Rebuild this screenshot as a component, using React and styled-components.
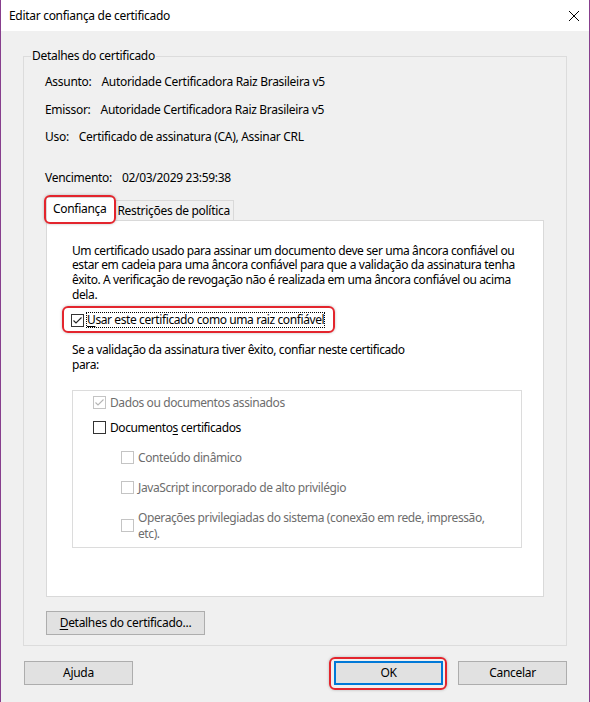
import React from 'react'
import styled, { createGlobalStyle, css } from 'styled-components'

const GlobalStyle = createGlobalStyle`
  html, body {
    margin: 0;
    padding: 0;
    background: #f0f0f0;
  }
  body {
    font-family: "Noto Sans", "Open Sans", sans-serif;
    font-size: 12px;
    color: #000;
  }
`

const marked = css`
  position: relative;
  &::after {
    content: '';
    position: absolute;
    inset: ${props => props.$mark};
    border: 2px solid #e3252d;
    border-radius: 6px;
    box-shadow: 0 0 3px rgba(0, 0, 0, 0.25);
    pointer-events: none;
  }
`

const Window = styled.div`
  width: 590px;
  height: 702px;
  box-sizing: border-box;
  border-left: 1px solid #873e8d;
  border-right: 1px solid #873e8d;
  background: #f0f0f0;
  display: flex;
  flex-direction: column;
`

const TitleBar = styled.div`
  height: 31px;
  flex: none;
  background: #fff;
  display: flex;
  align-items: center;
  justify-content: space-between;
  padding: 0 9px 0 8px;
`

const Title = styled.span`
  font-size: 12px;
  letter-spacing: -0.3px;
`

const Body = styled.div`
  flex: 1;
  display: flex;
  flex-direction: column;
  padding: 25px 22px 0;
  letter-spacing: -0.3px;
`

const GroupBox = styled.div`
  position: relative;
  border: 1px solid #dcdcdc;
  padding: 17px 22px 10px;
`

const GroupLegend = styled.span`
  position: absolute;
  top: -9px;
  left: 7px;
  padding: 0 1px;
  line-height: 16px;
  background: #f0f0f0;
`

const DetailList = styled.div`
  display: flex;
  flex-direction: column;
  gap: 11.5px;
  margin-left: -1px;
`

const DetailRow = styled.div`
  display: flex;
  gap: ${props => props.$gap || 10}px;
  line-height: 16px;
  margin-top: ${props => props.$push || 0}px;
`

const TabStrip = styled.div`
  display: flex;
  align-items: flex-end;
  height: 23px;
  margin-top: 11px;
  position: relative;
  z-index: 1;
`

const Tab = styled.div`
  box-sizing: border-box;
  display: flex;
  align-items: center;
  border: 1px solid #d9d9d9;
  border-bottom: none;
  ${props => props.$active ? css`
    height: 24px;
    margin-bottom: -1px;
    padding: 0 8px 1px 6px;
    background: #fff;
  ` : css`
    height: 20px;
    padding: 0 3px 0 2px;
    margin-left: -1px;
    background: #f0f0f0;
  `}
  ${props => props.$mark && marked}
`

const Panel = styled.div`
  box-sizing: border-box;
  height: 377px;
  background: #fff;
  border: 1px solid #d9d9d9;
  padding: 23px 21px 0 25px;
  display: flex;
  flex-direction: column;
  letter-spacing: -0.4px;
`

const Paragraph = styled.p`
  margin: ${props => props.$top || 0}px 0 0;
  line-height: 14.7px;
  white-space: nowrap;
`

const CheckRow = styled.div`
  display: flex;
  align-items: center;
  gap: ${props => props.$gap || 4}px;
  line-height: 16px;
  color: ${props => props.$disabled ? '#6d6d6d' : '#000'};
  ${props => props.$mark && marked}
`

const TrustRow = styled(CheckRow)`
  align-self: flex-start;
  margin: 10px 0 0 -1px;
`

const FocusLabel = styled.span`
  padding: 0 1px;
  outline: 1px dotted #000;
  outline-offset: -1px;
`

const Key = styled.span`
  text-decoration: underline;
  text-underline-offset: 2px;
`

const Box = styled.span`
  box-sizing: border-box;
  flex: none;
  width: 13px;
  height: 13px;
  border: 1px solid ${props => props.$disabled ? '#c4c4c4' : '#333'};
  background: #fff;
  display: flex;
  align-items: center;
  justify-content: center;
`

const OptionBox = styled.div`
  margin-top: 17px;
  border: 1px solid #dcdcdc;
  padding: 4px 10px 5px 20px;
  display: flex;
  flex-direction: column;
  gap: 9px;
`

const SubList = styled.div`
  display: flex;
  flex-direction: column;
  gap: 14px;
  margin-top: 5px;
  padding-left: 28px;
`

const Button = styled.button`
  box-sizing: border-box;
  height: 24px;
  width: ${props => props.$width}px;
  font-family: inherit;
  font-size: 12px;
  letter-spacing: -0.3px;
  color: #000;
  background: #e1e1e1;
  border: ${props => props.$primary ? '2px solid #0078d7' : '1px solid #adadad'};
  padding: 0;
  ${props => props.$mark && marked}
`

const DetailsButton = styled(Button)`
  margin-top: 14px;
  align-self: flex-start;
`

const Footer = styled.div`
  display: flex;
  justify-content: space-between;
  margin-top: 15px;
  padding-left: 1px;
`

const FooterRight = styled.div`
  display: flex;
  gap: 15px;
`

const Check = ({ checked, disabled }) => (
  <Box $disabled={disabled}>
    {checked && (
      <svg width="11" height="11" viewBox="0 0 11 11">
        <polyline points="1.5,5.5 4,8 9.5,2.5" fill="none" stroke={disabled ? '#b5b5b5' : '#222'} strokeWidth="1.1" />
      </svg>
    )}
  </Box>
)

const CloseIcon = () => (
  <svg width="12" height="12" viewBox="0 0 12 12">
    <path d="M1 1 L11 11 M11 1 L1 11" stroke="#000" strokeWidth="1" fill="none" />
  </svg>
)

const details = [
  { label: 'Assunto:', value: 'Autoridade Certificadora Raiz Brasileira v5', gap: 10 },
  { label: 'Emissor:', value: 'Autoridade Certificadora Raiz Brasileira v5', gap: 10 },
  { label: 'Uso:', value: 'Certificado de assinatura (CA), Assinar CRL', gap: 10 },
  { label: 'Vencimento:', value: '02/03/2029 23:59:38', gap: 10, push: 13 },
]

const App = () => (
  <>
    <GlobalStyle />
    <Window>
      <TitleBar>
        <Title>Editar confiança de certificado</Title>
        <CloseIcon />
      </TitleBar>
      <Body>
        <GroupBox>
          <GroupLegend>Detalhes do certificado</GroupLegend>
          <DetailList>
            {details.map(d => (
              <DetailRow key={d.label} $gap={d.gap} $push={d.push}>
                <span>{d.label}</span>
                <span>{d.value}</span>
              </DetailRow>
            ))}
          </DetailList>
          <TabStrip>
            <Tab $active $mark="-3px -2px -3px -3px">Confiança</Tab>
            <Tab>Restrições de política</Tab>
          </TabStrip>
          <Panel>
            <Paragraph>
              Um certificado usado para assinar um documento deve ser uma âncora confiável ou<br />
              estar em cadeia para uma âncora confiável para que a validação da assinatura tenha<br />
              êxito. A verificação de revogação não é realizada em uma âncora confiável ou acima<br />
              dela.
            </Paragraph>
            <TrustRow $gap={2} $mark="-6px -10px -5px -9px">
              <Check checked />
              <FocusLabel><Key>U</Key>sar este certificado como uma raiz confiável</FocusLabel>
            </TrustRow>
            <Paragraph $top={15}>
              Se a validação da assinatura tiver êxito, confiar neste certificado<br />
              para:
            </Paragraph>
            <OptionBox>
              <CheckRow $disabled>
                <Check checked disabled />
                <span>Dados ou documentos assinados</span>
              </CheckRow>
              <CheckRow>
                <Check />
                <span>Documento<Key>s</Key> certificados</span>
              </CheckRow>
              <SubList>
                <CheckRow $disabled>
                  <Check disabled />
                  <span>Conteúdo dinâmico</span>
                </CheckRow>
                <CheckRow $disabled>
                  <Check disabled />
                  <span>JavaScript incorporado de alto privilégio</span>
                </CheckRow>
                <CheckRow $disabled>
                  <Check disabled />
                  <span>Operações privilegiadas do sistema (conexão em rede, impressão,<br />etc).</span>
                </CheckRow>
              </SubList>
            </OptionBox>
          </Panel>
          <DetailsButton $width={159}><Key>D</Key>etalhes do certificado...</DetailsButton>
        </GroupBox>
        <Footer>
          <Button $width={109}>Ajuda</Button>
          <FooterRight>
            <Button $width={109} $primary $mark="-6px -6px -7px -7px">OK</Button>
            <Button $width={109}>Cancelar</Button>
          </FooterRight>
        </Footer>
      </Body>
    </Window>
  </>
)

export default App
